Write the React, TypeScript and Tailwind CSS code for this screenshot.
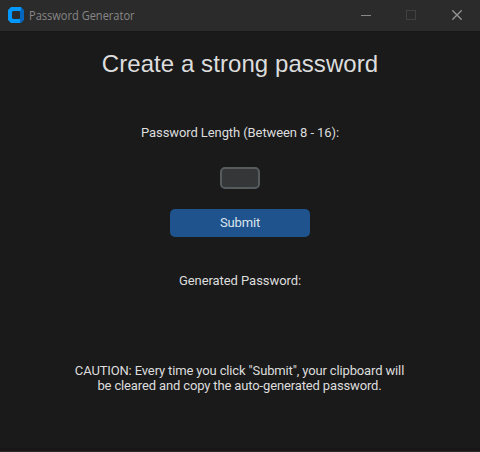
function Logo() {
  return (
    <svg className="h-4 w-4" viewBox="0 0 16 16" fill="none">
      <path d="M3 0H13V4H5L4 5V11L5 12H13V16H3L0 13V3Z" fill="#0398ff" />
      <path d="M13 0L16 3V13L13 16H12V12H11L12 11V5L11 4H12L13 3Z" fill="#0566bd" />
    </svg>
  );
}

function TitleBar() {
  return (
    <header className="flex h-8 items-center border-b border-[#1a1719] bg-[#2b2b2b] pb-px pl-2">
      <Logo />
      <span className="ml-[5px] mt-px origin-left whitespace-nowrap font-['Open_Sans',sans-serif] text-[12px] leading-4 text-[#888888] [transform:scaleX(0.92)]">
        Password Generator
      </span>
      <div className="ml-auto flex items-center pr-[18px]">
        <svg className="mr-[35px] h-[10px] w-[10px]" viewBox="0 0 10 10" shapeRendering="crispEdges">
          <path d="M0 5.5H10" stroke="#888888" />
        </svg>
        <svg className="mr-9 h-[10px] w-[10px]" viewBox="0 0 10 10" fill="none" shapeRendering="crispEdges">
          <rect x="0.5" y="0.5" width="9" height="9" stroke="#414141" />
        </svg>
        <svg className="h-[10px] w-[10px]" viewBox="0 0 10 10">
          <path d="M0.3 0.3L9.7 9.7M9.7 0.3L0.3 9.7" stroke="#929292" strokeWidth="1.4" />
        </svg>
      </div>
    </header>
  );
}

export default function App() {
  return (
    <div className="flex h-[452px] w-[480px] flex-col overflow-hidden bg-[#1a1a1a] font-[Roboto,sans-serif] text-[13px] leading-[15px] text-[#dce4ee]">
      <TitleBar />
      <main className="flex flex-1 flex-col items-center text-[#dddddd]">
        <h1 className="mt-[18px] whitespace-nowrap font-['Liberation_Sans',Arial,sans-serif] text-[24px] leading-7 tracking-[0.07px]">
          Create a strong password
        </h1>
        <label htmlFor="length" className="mt-[47px] tracking-[-0.09px]">
          Password Length (Between 8 - 16):
        </label>
        <input
          id="length"
          className="mt-[27px] h-[22px] w-10 rounded-[5px] border-2 border-[#565b5e] bg-[#343638] px-1 outline-none"
        />
        <button className="mt-5 h-7 w-[140px] rounded-[5px] bg-[#1f538d] pb-px tracking-[-0.13px] text-[#dce4ee]">
          Submit
        </button>
        <p className="mt-9 tracking-[-0.06px]">Generated Password:</p>
        <p className="mt-[75px] whitespace-nowrap pr-px text-center tracking-[-0.14px]">
          CAUTION: Every time you click "Submit", your clipboard will
          <br />
          be cleared and copy the auto-generated password.
        </p>
      </main>
      <footer className="h-1 border-b border-[#30292c] bg-[#181617]" />
    </div>
  );
}
